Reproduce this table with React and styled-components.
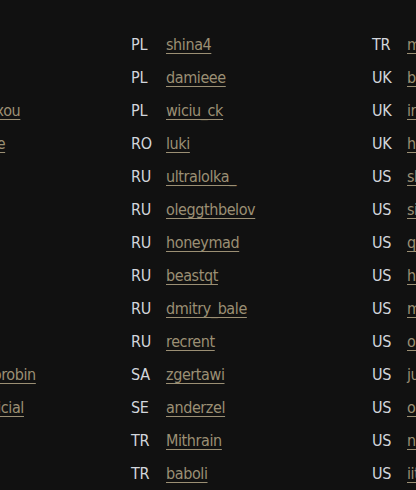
import React from "react";
import styled, { createGlobalStyle } from "styled-components";

const columns = [
  [
    ["PL", "aleks"],
    ["PL", "bartek"],
    ["PL", "tsimtsikhaxou"],
    ["PL", "maximusee"],
    ["RO", "vlad"],
    ["RU", "login"],
    ["RU", "misha"],
    ["RU", "ivan"],
    ["RU", "kira_l"],
    ["RU", "gleb"],
    ["RU", "yandexbobrobin"],
    ["RU", "kharma_oficial"],
    ["PL", "dasha"],
    ["PL", "kurt_n"],
  ],
  [
    ["PL", "shina4"],
    ["PL", "damieee"],
    ["PL", "wiciu_ck"],
    ["RO", "luki"],
    ["RU", "ultralolka_"],
    ["RU", "oleggthbelov"],
    ["RU", "honeymad"],
    ["RU", "beastqt"],
    ["RU", "dmitry_bale"],
    ["RU", "recrent"],
    ["SA", "zgertawi"],
    ["SE", "anderzel"],
    ["TR", "Mithrain"],
    ["TR", "baboli"],
  ],
  [
    ["TR", "mrs"],
    ["UK", "bigbrother"],
    ["UK", "iron"],
    ["UK", "hella"],
    ["US", "shroud"],
    ["US", "sinatraa"],
    ["US", "qt"],
    ["US", "hiko"],
    ["US", "mike"],
    ["US", "olofm"],
    ["US", "just9n", true],
    ["US", "ohnepixel"],
    ["US", "n0thing"],
    ["US", "iitztimmy"],
  ],
];

const GlobalStyle = createGlobalStyle`
  html, body {
    margin: 0;
    padding: 0;
    background: #111111;
    overflow: hidden;
  }
  body {
    font-family: "DejaVu Sans Condensed", "Liberation Sans Narrow", "Liberation Sans", sans-serif;
  }
`;

const Page = styled.div`
  width: 416px;
  height: 490px;
  background: #111111;
  overflow: hidden;
`;

const Board = styled.div`
  display: flex;
  margin-left: -110px;
  padding-top: 28px;
`;

const Column = styled.div`
  width: 241px;
  flex-shrink: 0;
  display: flex;
  flex-direction: column;
`;

const Row = styled.div`
  display: flex;
  align-items: center;
  height: 33px;
  font-size: 16px;
  white-space: nowrap;
`;

const Code = styled.span`
  width: 35px;
  flex-shrink: 0;
  color: #d2d6dc;
  letter-spacing: -0.3px;
`;

const Name = styled.a`
  color: #9b8f74;
  letter-spacing: -0.4px;
  text-decoration: ${(p) => (p.$plain ? "none" : "underline")};
  text-underline-offset: 3px;
  text-decoration-thickness: 1px;
`;

export default function App() {
  return (
    <Page>
      <GlobalStyle />
      <Board>
        {columns.map((col, ci) => (
          <Column key={ci}>
            {col.map(([code, name, plain]) => (
              <Row key={name}>
                <Code>{code}</Code>
                <Name href="#" $plain={plain}>
                  {name}
                </Name>
              </Row>
            ))}
          </Column>
        ))}
      </Board>
    </Page>
  );
}
